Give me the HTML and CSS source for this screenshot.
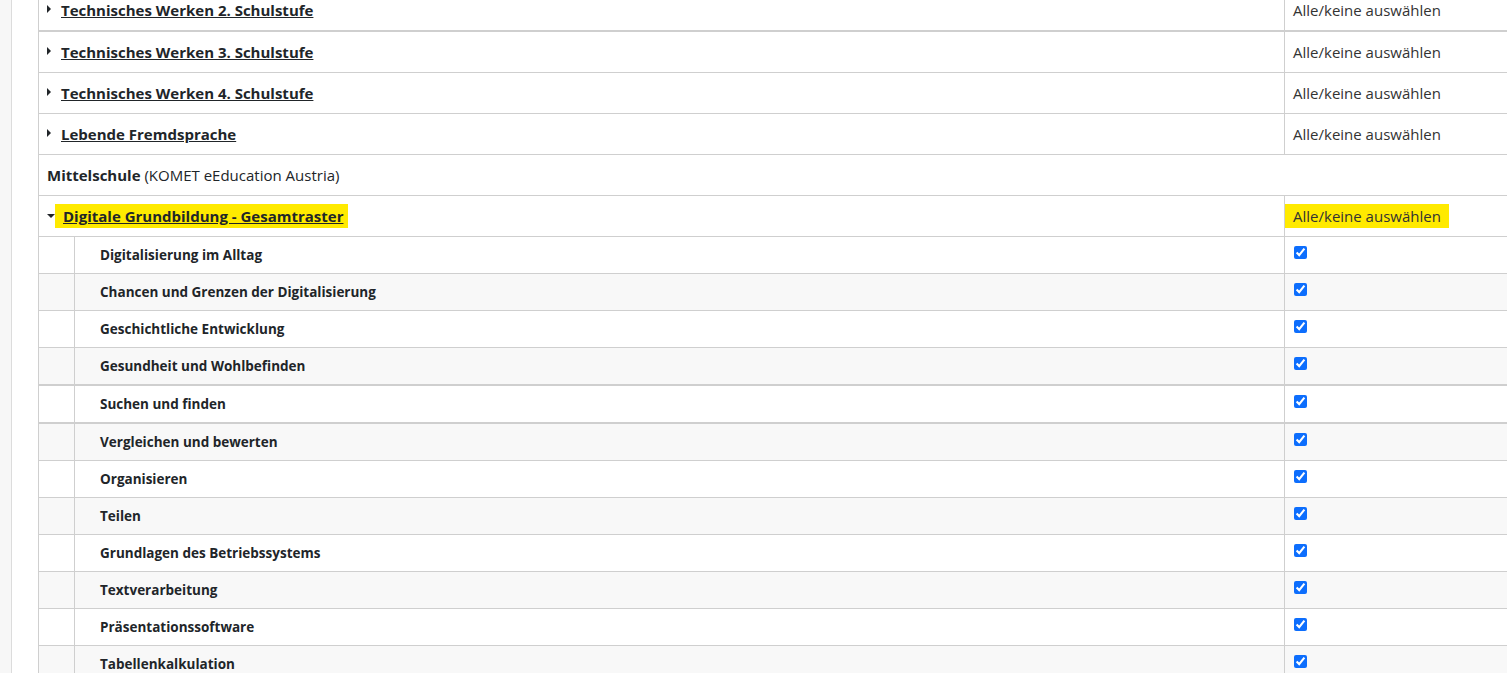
FILE: index.html
```html
<!DOCTYPE html>
<html lang="de">
<head>
    <meta charset="UTF-8">
    <meta name="viewport" content="width=device-width, initial-scale=1.0">
    <title>Kompetenzraster auswählen</title>
    <link rel="stylesheet" href="styles.css">
</head>
<body>
    <div class="page">
        <div class="sidebar"></div>

        <div class="content">
            <table class="raster-table">
                <colgroup>
                    <col class="col-indent">
                    <col class="col-name">
                    <col class="col-select">
                </colgroup>

                <!-- Volksschule Raster (zugeklappt) -->
                <tr class="raster-row first-row">
                    <td colspan="2"><span class="arrow arrow-right"></span><a href="#">Technisches Werken 2. Schulstufe</a></td>
                    <td class="select-cell">Alle/keine auswählen</td>
                </tr>
                <tr class="raster-row thick-top">
                    <td colspan="2"><span class="arrow arrow-right"></span><a href="#">Technisches Werken 3. Schulstufe</a></td>
                    <td class="select-cell">Alle/keine auswählen</td>
                </tr>
                <tr class="raster-row">
                    <td colspan="2"><span class="arrow arrow-right"></span><a href="#">Technisches Werken 4. Schulstufe</a></td>
                    <td class="select-cell">Alle/keine auswählen</td>
                </tr>
                <tr class="raster-row">
                    <td colspan="2"><span class="arrow arrow-right"></span><a href="#">Lebende Fremdsprache</a></td>
                    <td class="select-cell">Alle/keine auswählen</td>
                </tr>

                <!-- Schultyp -->
                <tr class="school-row">
                    <td colspan="3"><strong>Mittelschule</strong> (KOMET eEducation Austria)</td>
                </tr>

                <!-- Aufgeklappter Raster -->
                <tr class="raster-row open">
                    <td colspan="2"><span class="arrow arrow-down"></span><a href="#" class="highlight">Digitale Grundbildung - Gesamtraster</a></td>
                    <td class="select-cell"><span class="highlight">Alle/keine auswählen</span></td>
                </tr>
                <tr class="item-row">
                    <td></td><td class="item-name">Digitalisierung im Alltag</td>
                    <td><input type="checkbox" checked></td>
                </tr>
                <tr class="item-row">
                    <td></td><td class="item-name">Chancen und Grenzen der Digitalisierung</td>
                    <td><input type="checkbox" checked></td>
                </tr>
                <tr class="item-row">
                    <td></td><td class="item-name">Geschichtliche Entwicklung</td>
                    <td><input type="checkbox" checked></td>
                </tr>
                <tr class="item-row">
                    <td></td><td class="item-name">Gesundheit und Wohlbefinden</td>
                    <td><input type="checkbox" checked></td>
                </tr>
                <tr class="item-row thick-top">
                    <td></td><td class="item-name">Suchen und finden</td>
                    <td><input type="checkbox" checked></td>
                </tr>
                <tr class="item-row thick-top">
                    <td></td><td class="item-name">Vergleichen und bewerten</td>
                    <td><input type="checkbox" checked></td>
                </tr>
                <tr class="item-row">
                    <td></td><td class="item-name">Organisieren</td>
                    <td><input type="checkbox" checked></td>
                </tr>
                <tr class="item-row">
                    <td></td><td class="item-name">Teilen</td>
                    <td><input type="checkbox" checked></td>
                </tr>
                <tr class="item-row">
                    <td></td><td class="item-name">Grundlagen des Betriebssystems</td>
                    <td><input type="checkbox" checked></td>
                </tr>
                <tr class="item-row">
                    <td></td><td class="item-name">Textverarbeitung</td>
                    <td><input type="checkbox" checked></td>
                </tr>
                <tr class="item-row">
                    <td></td><td class="item-name">Präsentationssoftware</td>
                    <td><input type="checkbox" checked></td>
                </tr>
                <tr class="item-row">
                    <td></td><td class="item-name">Tabellenkalkulation</td>
                    <td><input type="checkbox" checked></td>
                </tr>
                <tr class="item-row">
                    <td></td><td class="item-name">Multimedia</td>
                    <td><input type="checkbox" checked></td>
                </tr>
            </table>
        </div>
    </div>
</body>
</html>
```

FILE: styles.css
```css
html, body {
    margin: 0;
    padding: 0;
    height: 100%;
    overflow: hidden;
}

body {
    font-family: "Open Sans", "Noto Sans", Arial, sans-serif;
    font-size: 15px;
    color: #212529;
    background-color: #fff;
}

.page {
    display: flex;
    height: 100%;
}

.sidebar {
    flex: 0 0 11px;
    background-color: #f7f7f7;
    border-right: 1px solid #dcdcdc;
}

.content {
    flex: 1;
    padding-left: 26px;
}

.raster-table {
    border-collapse: collapse;
    width: 1500px;
    table-layout: fixed;
}

.col-indent {
    width: 36px;
}

.col-name {
    width: 1210px;
}

.raster-table td {
    border: 1px solid #cfcfcf;
    line-height: 20px;
    vertical-align: top;
}

.raster-row td,
.school-row td {
    padding: 10px 8px;
}

.raster-row a {
    color: #212529;
    font-weight: bold;
    text-decoration: underline;
}

.thick-top td {
    border-top: 2px solid #cfcfcf;
}

/* Seite ist etwas gescrollt, erste Zeile nur halb sichtbar */
.first-row td {
    padding-top: 0;
    padding-bottom: 10px;
    border-top: none;
}

.arrow {
    display: inline-block;
    width: 0;
    height: 0;
    margin-right: 10px;
    vertical-align: 3px;
}

.arrow-right {
    border-top: 4px solid transparent;
    border-bottom: 4px solid transparent;
    border-left: 4px solid #212529;
}

.arrow-down {
    border-left: 4px solid transparent;
    border-right: 4px solid transparent;
    border-top: 4px solid #212529;
    margin-right: 0;
    vertical-align: 4px;
}

.select-cell {
    color: #333;
}

.highlight {
    background-color: #ffea00;
    padding: 2px 5px 2px 8px;
}

.select-cell .highlight {
    margin-left: -8px;
    padding-right: 8px;
}

.item-row td {
    padding: 8px;
}

.item-row:nth-child(even) td {
    background-color: #f8f8f8;
}

.item-name {
    padding-left: 25px !important;
    font-size: 13.5px;
    font-weight: bold;
}

.item-row input[type="checkbox"] {
    display: block;
    margin: 1px 0 0 1px;
    width: 13px;
    height: 13px;
    accent-color: #0d6efd;
}
```
